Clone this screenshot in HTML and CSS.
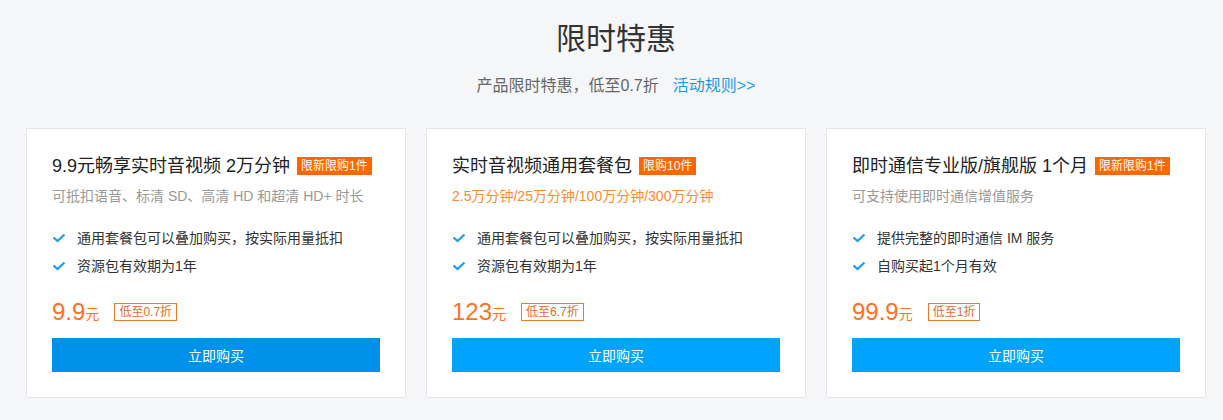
FILE: index.html
```html
<!DOCTYPE html>
<html lang="zh-CN">
<head>
  <meta charset="UTF-8" />
  <meta name="viewport" content="width=device-width, initial-scale=1" />
  <title>限时特惠</title>
  <link rel="stylesheet" href="styles.css">
</head>
<body>
  <section class="promo">
    <h1 class="promo-title">限时特惠</h1>
    <p class="promo-sub">产品限时特惠，低至0.7折<a href="#" class="rule-link">活动规则&gt;&gt;</a></p>

    <div class="cards">
      <div class="card">
        <h2 class="card-title">9.9元畅享实时音视频 2万分钟<span class="tag">限新限购1件</span></h2>
        <p class="card-desc">可抵扣语音、标清 SD、高清 HD 和超清 HD+ 时长</p>
        <ul class="features">
          <li><svg class="check" viewBox="0 0 14 10"><path d="M1.5 4.5 L5.5 8 L12.5 1.5" /></svg>通用套餐包可以叠加购买，按实际用量抵扣</li>
          <li><svg class="check" viewBox="0 0 14 10"><path d="M1.5 4.5 L5.5 8 L12.5 1.5" /></svg>资源包有效期为1年</li>
        </ul>
        <div class="price-row">
          <span class="price">9.9</span><span class="unit">元</span>
          <span class="discount">低至0.7折</span>
        </div>
        <button class="buy buy-active">立即购买</button>
      </div>

      <div class="card">
        <h2 class="card-title">实时音视频通用套餐包<span class="tag">限购10件</span></h2>
        <p class="card-desc orange">2.5万分钟/25万分钟/100万分钟/300万分钟</p>
        <ul class="features">
          <li><svg class="check" viewBox="0 0 14 10"><path d="M1.5 4.5 L5.5 8 L12.5 1.5" /></svg>通用套餐包可以叠加购买，按实际用量抵扣</li>
          <li><svg class="check" viewBox="0 0 14 10"><path d="M1.5 4.5 L5.5 8 L12.5 1.5" /></svg>资源包有效期为1年</li>
        </ul>
        <div class="price-row">
          <span class="price">123</span><span class="unit">元</span>
          <span class="discount">低至6.7折</span>
        </div>
        <button class="buy">立即购买</button>
      </div>

      <div class="card">
        <h2 class="card-title">即时通信专业版/旗舰版 1个月<span class="tag">限新限购1件</span></h2>
        <p class="card-desc">可支持使用即时通信增值服务</p>
        <ul class="features">
          <li><svg class="check" viewBox="0 0 14 10"><path d="M1.5 4.5 L5.5 8 L12.5 1.5" /></svg>提供完整的即时通信 IM 服务</li>
          <li><svg class="check" viewBox="0 0 14 10"><path d="M1.5 4.5 L5.5 8 L12.5 1.5" /></svg>自购买起1个月有效</li>
        </ul>
        <div class="price-row">
          <span class="price">99.9</span><span class="unit">元</span>
          <span class="discount">低至1折</span>
        </div>
        <button class="buy">立即购买</button>
      </div>
    </div>
  </section>
</body>
</html>
```

FILE: styles.css
```css
body {
  margin: 0;
  font-family: 'Liberation Sans', 'Noto Sans CJK SC', sans-serif;
  background-color: #f5f6f8;
  color: #333;
}

.promo {
  width: 1180px;
  margin-left: 26px;
  padding-top: 19px;
}

.promo-title {
  margin: 0;
  font-size: 30px;
  font-weight: normal;
  line-height: 40px;
  text-align: center;
  color: #333;
}

.promo-sub {
  margin: 15px 0 0;
  font-size: 16px;
  line-height: 24px;
  text-align: center;
  color: #666;
}

.rule-link {
  margin-left: 14px;
  color: #1a9be8;
  text-decoration: none;
}

.cards {
  display: flex;
  gap: 20px;
  margin-top: 30px;
}

.card {
  flex: 1;
  background-color: #fff;
  border: 1px solid #e3e5e8;
  padding: 25px;
}

.card-title {
  margin: 0;
  font-size: 18px;
  font-weight: normal;
  line-height: 24px;
  color: #222;
  display: flex;
  align-items: center;
}

.tag {
  margin-left: 7px;
  padding: 0 4px;
  height: 18px;
  line-height: 18px;
  font-size: 12px;
  color: #fff;
  background-color: #ff6600;
}

.card-desc {
  margin: 8px 0 0;
  font-size: 14px;
  line-height: 20px;
  color: #999;
}

.card-desc.orange {
  color: #ff8a2e;
}

.features {
  list-style: none;
  margin: 18px 0 0;
  padding: 0;
}

.features li {
  display: flex;
  align-items: center;
  font-size: 14px;
  line-height: 28px;
  color: #333;
}

.check {
  width: 14px;
  height: 10px;
  margin-right: 11px;
  fill: none;
  stroke: #1c9be6;
  stroke-width: 2.2;
}

.price-row {
  display: flex;
  align-items: center;
  height: 30px;
  margin-top: 17px;
}

.price {
  font-size: 24px;
  line-height: 30px;
  color: #ff7222;
}

.unit {
  font-size: 14px;
  line-height: 30px;
  padding-top: 4px;
  color: #ff7222;
}

.discount {
  margin-left: 15px;
  padding: 0 4px;
  height: 16px;
  line-height: 16px;
  font-size: 12px;
  color: #e86a2c;
  border: 1px solid #e8792f;
}

.buy {
  display: block;
  width: 100%;
  height: 34px;
  margin-top: 11px;
  border: none;
  background-color: #00a4ff;
  color: #fff;
  font-family: inherit;
  font-size: 14px;
  cursor: pointer;
}

.buy:hover,
.buy-active {
  background-color: #0092ea;
}
```
